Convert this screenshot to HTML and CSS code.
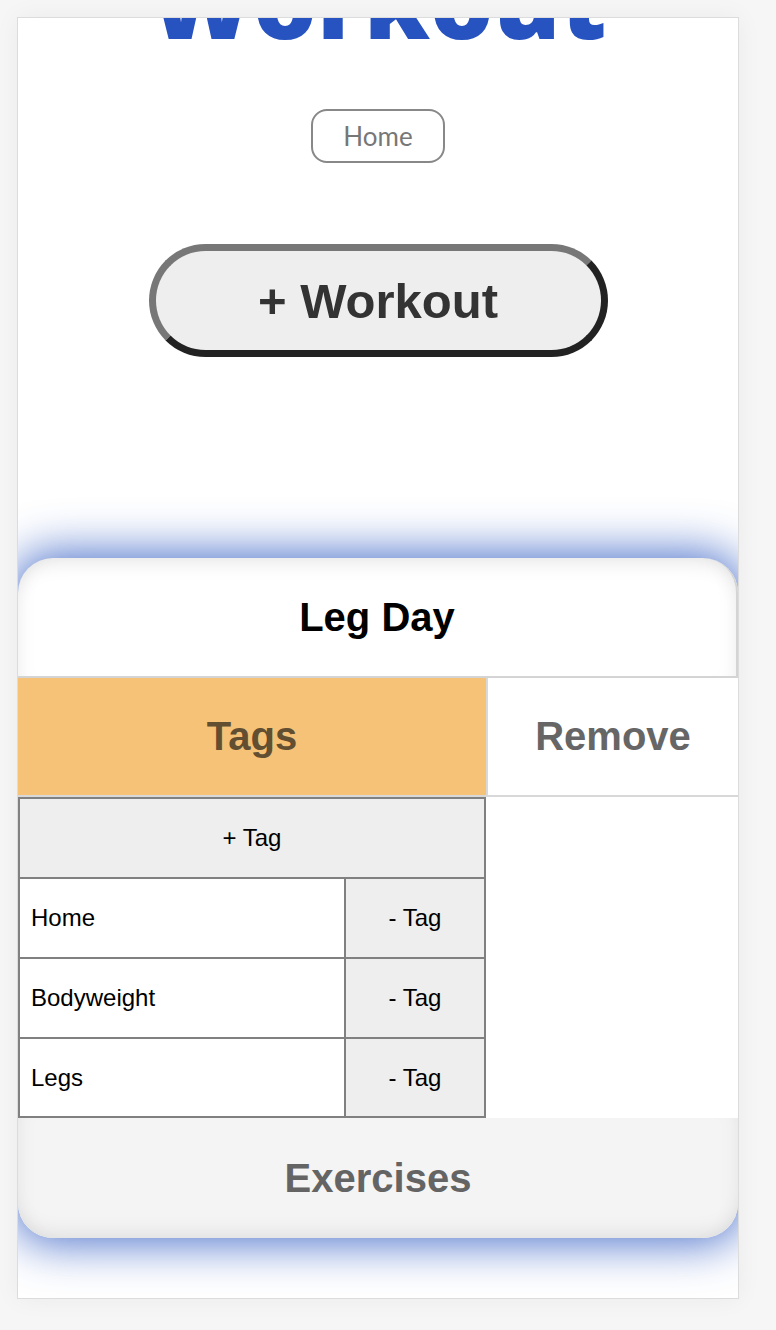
FILE: index.html
```html
<!DOCTYPE html>
<html>
<head>
<meta charset="utf-8">
<link rel="stylesheet" href="styles.css">
</head>
<body>
<div class="page">
  <main class="panel">
    <h1 class="title">Workout</h1>
    <div class="nav"><button class="home-btn">Home</button></div>
    <div class="add-wrap"><button class="add-btn">+ Workout</button></div>
    <section class="card">
      <header class="card-head">Leg Day</header>
      <div class="tabs">
        <div class="tab tab-active">Tags</div>
        <div class="tab-sep"></div>
        <div class="tab tab-remove">Remove</div>
      </div>
      <div class="tag-area">
        <div class="tag-grid">
          <div class="cell add-tag">+ Tag</div>
          <div class="cell name">Home</div>
          <div class="cell minus">- Tag</div>
          <div class="cell name">Bodyweight</div>
          <div class="cell minus">- Tag</div>
          <div class="cell name">Legs</div>
          <div class="cell minus">- Tag</div>
        </div>
      </div>
      <footer class="card-foot">Exercises</footer>
    </section>
  </main>
</div>
</body>
</html>
```
FILE: styles.css
```css
html, body {
  margin: 0;
  padding: 0;
}
body {
  background: #f6f6f6;
  font-family: "Liberation Sans", Arial, sans-serif;
}
.page {
  padding: 17px 37px 31px 17px;
}
.panel {
  display: block;
  height: 1282px;
  box-sizing: border-box;
  border: 1px solid #dcdcdc;
  background: #fff;
  overflow: hidden;
  box-shadow: 0 0 24px rgba(0, 0, 0, 0.05);
}
.title {
  margin: -68px 0 0 0;
  font-family: "Open Sans", sans-serif;
  font-weight: 800;
  font-size: 100px;
  line-height: 100px;
  color: #2653bf;
  text-align: center;
  letter-spacing: 0;
}
.nav {
  display: flex;
  justify-content: center;
  margin-top: 59px;
}
.home-btn {
  width: 134px;
  height: 54px;
  border: 2px solid #888;
  border-radius: 16px;
  background: #fff;
  color: #777;
  font-family: "Lato", sans-serif;
  font-size: 26px;
  padding: 0;
}
.add-wrap {
  display: flex;
  justify-content: center;
  margin-top: 81px;
}
.add-btn {
  width: 459px;
  height: 113px;
  border: 7px solid;
  border-color: #777 #222 #222 #777;
  border-radius: 57px;
  background: #eee;
  color: #333;
  font-family: "Liberation Sans", Arial, sans-serif;
  font-weight: 700;
  font-size: 49px;
  padding: 0;
}
.card {
  margin-top: 201px;
  border-radius: 35px;
  background: #fff;
  box-shadow: 0 0 46px 6px rgba(38, 83, 191, 0.8);
}
.card-head {
  height: 118px;
  display: flex;
  align-items: center;
  justify-content: center;
  font-weight: 700;
  font-size: 40px;
  color: #000;
  border-radius: 35px 35px 0 0;
  border-right: 2px solid #d4d4d4;
  border-bottom: 2px solid #d4d4d4;
  box-shadow: inset 0 14px 22px -12px rgba(0, 0, 0, 0.12), inset 16px 0 22px -16px rgba(0, 0, 0, 0.06), inset -16px 0 22px -16px rgba(0, 0, 0, 0.06);
}
.tabs {
  display: flex;
  height: 117px;
  border-bottom: 2px solid #d8d8d8;
}
.tab {
  display: flex;
  align-items: center;
  justify-content: center;
  font-weight: 700;
  font-size: 40px;
}
.tab-active {
  width: 468px;
  background: #f5c277;
  color: #624e30;
}
.tab-sep {
  width: 2px;
  background: #d8d8d8;
}
.tab-remove {
  flex: 1;
  background: #fff;
  color: #666;
}
.tag-area {
  background: #fff;
}
.tag-grid {
  width: 468px;
  box-sizing: border-box;
  display: grid;
  grid-template-columns: 324px 138px;
  grid-template-rows: 78px 78px 78px 77px;
  gap: 2px;
  padding: 2px;
  background: #808080;
}
.cell {
  display: flex;
  align-items: center;
  font-size: 24px;
  color: #000;
}
.add-tag {
  grid-column: 1 / 3;
  justify-content: center;
  background: #eee;
}
.name {
  background: #fff;
  padding-left: 11px;
}
.minus {
  justify-content: center;
  background: #eee;
}
.card-foot {
  height: 120px;
  display: flex;
  align-items: center;
  justify-content: center;
  background: #f4f4f4;
  color: #646464;
  font-weight: 700;
  font-size: 40px;
  border-radius: 0 0 35px 35px;
  box-shadow: inset 0 -14px 22px -12px rgba(0, 0, 0, 0.1), inset 16px 0 22px -16px rgba(0, 0, 0, 0.05), inset -16px 0 22px -16px rgba(0, 0, 0, 0.05);
}
```
